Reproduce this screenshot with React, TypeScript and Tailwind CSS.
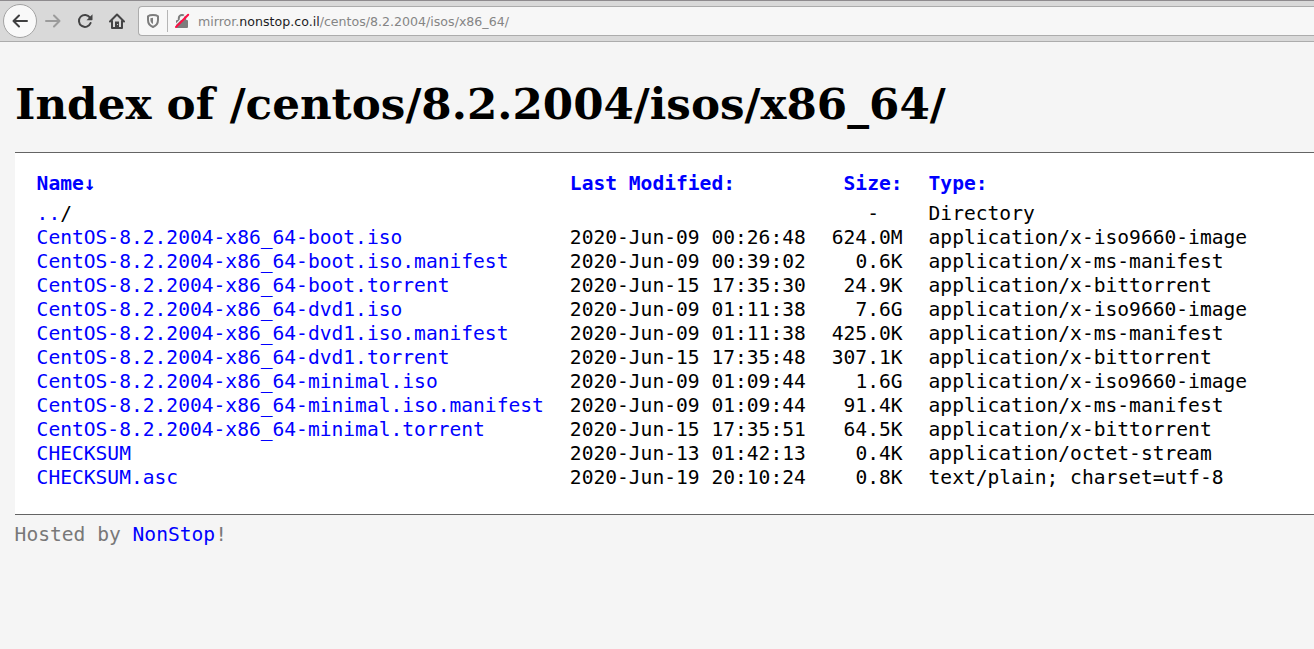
import React from "react";

type Entry = { name: string; modified: string; size: string; type: string };

const entries: Entry[] = [
  { name: "CentOS-8.2.2004-x86_64-boot.iso", modified: "2020-Jun-09 00:26:48", size: "624.0M", type: "application/x-iso9660-image" },
  { name: "CentOS-8.2.2004-x86_64-boot.iso.manifest", modified: "2020-Jun-09 00:39:02", size: "0.6K", type: "application/x-ms-manifest" },
  { name: "CentOS-8.2.2004-x86_64-boot.torrent", modified: "2020-Jun-15 17:35:30", size: "24.9K", type: "application/x-bittorrent" },
  { name: "CentOS-8.2.2004-x86_64-dvd1.iso", modified: "2020-Jun-09 01:11:38", size: "7.6G", type: "application/x-iso9660-image" },
  { name: "CentOS-8.2.2004-x86_64-dvd1.iso.manifest", modified: "2020-Jun-09 01:11:38", size: "425.0K", type: "application/x-ms-manifest" },
  { name: "CentOS-8.2.2004-x86_64-dvd1.torrent", modified: "2020-Jun-15 17:35:48", size: "307.1K", type: "application/x-bittorrent" },
  { name: "CentOS-8.2.2004-x86_64-minimal.iso", modified: "2020-Jun-09 01:09:44", size: "1.6G", type: "application/x-iso9660-image" },
  { name: "CentOS-8.2.2004-x86_64-minimal.iso.manifest", modified: "2020-Jun-09 01:09:44", size: "91.4K", type: "application/x-ms-manifest" },
  { name: "CentOS-8.2.2004-x86_64-minimal.torrent", modified: "2020-Jun-15 17:35:51", size: "64.5K", type: "application/x-bittorrent" },
  { name: "CHECKSUM", modified: "2020-Jun-13 01:42:13", size: "0.4K", type: "application/octet-stream" },
  { name: "CHECKSUM.asc", modified: "2020-Jun-19 20:10:24", size: "0.8K", type: "text/plain; charset=utf-8" },
];

function Toolbar() {
  return (
    <header className="flex h-[42px] items-center border-t border-b border-t-[#8e8b8e] border-b-[#acacac] bg-[#d9d9d9]">
      <button aria-label="Back" className="ml-[3px] flex size-[34px] shrink-0 items-center justify-center rounded-full border border-[#a3a3a3] bg-[#f9f9f9]">
        <svg width="16" height="16" viewBox="0 0 16 16" fill="none" stroke="#3f3f40" strokeWidth="2" strokeLinecap="round" strokeLinejoin="round">
          <path d="M15 8H1.5M7 2.5L1.5 8L7 13.5" />
        </svg>
      </button>
      <button aria-label="Forward" className="ml-2 shrink-0">
        <svg width="16" height="16" viewBox="0 0 16 16" fill="none" stroke="#9b9b9b" strokeWidth="2" strokeLinecap="round" strokeLinejoin="round">
          <path d="M1 8H14.5M9 2.5L14.5 8L9 13.5" />
        </svg>
      </button>
      <button aria-label="Reload" className="ml-4 shrink-0">
        <svg width="16" height="16" viewBox="0 0 16 16" fill="none">
          <path d="M13 4.6A6 6 0 1 0 13.6 10" stroke="#444445" strokeWidth="2" strokeLinecap="round" />
          <path d="M15.5 1.2V6.6a.6.6 0 0 1-.6.6H9.5Z" fill="#444445" />
        </svg>
      </button>
      <button aria-label="Home" className="ml-4 shrink-0">
        <svg width="16" height="16" viewBox="0 0 16 16" fill="none" stroke="#444445" strokeWidth="2" strokeLinecap="round" strokeLinejoin="round">
          <path d="M1 8.5L8 1.5L15 8.5M3 8V15H13V8" />
          <path d="M6 15V8.5H10V15Z" fill="#444445" stroke="none" />
          <path d="M8.5 11.5h.2" stroke="#d9d9d9" strokeWidth="1" />
        </svg>
      </button>
      <div className="ml-[13px] flex h-[30px] flex-1 items-center rounded-l border border-r-0 border-[#acacac] bg-[#f7f7f7]">
        <svg className="ml-1.5 shrink-0" width="16" height="16" viewBox="0 0 16 16">
          <path d="M8 2C10 2 12 2.5 13 3.2V7C13 10.5 11 12.8 8 14C5 12.8 3 10.5 3 7V3.2C4 2.5 6 2 8 2Z" fill="none" stroke="#7d7d7d" strokeWidth="2" strokeLinejoin="round" />
          <path d="M8 4.7V11C6.2 10 5.4 8.7 5.4 7V5.2Z" fill="#7d7d7d" />
        </svg>
        <div className="ml-1.5 h-[22px] w-px bg-[#b5b5b5]" />
        <svg className="ml-1.5 shrink-0" width="16" height="16" viewBox="0 0 16 16" fill="none">
          <path d="M4.8 8V5.2a3.2 3.2 0 0 1 6.4 0V8" stroke="#7d7d7d" strokeWidth="2" />
          <rect x="2" y="7" width="12" height="8" rx="1" fill="#7d7d7d" />
          <path d="M.6 12.6L13.2 0" stroke="#f7f7f7" strokeWidth="1.2" />
          <path d="M2 14L14.2 1.8" stroke="#ff0f45" strokeWidth="2" strokeLinecap="round" />
        </svg>
        <span className="mt-0.5 ml-2 font-['DejaVu_Sans',sans-serif] text-[12.6px] leading-4 whitespace-nowrap text-[#858585]">
          mirror.<span className="text-[#1d1d1f]">nonstop.co.il</span>/centos/8.2.2004/isos/x86_64/
        </span>
      </div>
    </header>
  );
}

export default function App() {
  return (
    <div className="flex h-screen flex-col overflow-hidden bg-[#f5f5f5]">
      <Toolbar />
      <main className="pl-[15px] font-['DejaVu_Sans_Mono',monospace] text-[19.6px] leading-6 text-black">
        <h1 className="mt-9 mb-[22px] font-['DejaVu_Serif',serif] text-[43.64px] leading-[52px] font-bold whitespace-nowrap">
          Index of /centos/8.2.2004/isos/x86_64/
        </h1>
        <section className="h-[363px] border-y border-[#646464] bg-white pt-[19px] pl-[21.6px]">
          <table className="border-collapse text-left whitespace-nowrap">
            <thead>
              <tr className="text-[#0000ff]">
                <th className="pr-[26px] pb-1.5"><a href="#name">Name</a>↓</th>
                <th className="pr-[26px] pb-1.5"><a href="#modified">Last Modified:</a></th>
                <th className="pr-[26px] pb-1.5 text-right"><a href="#size">Size:</a></th>
                <th className="pb-1.5"><a href="#type">Type:</a></th>
              </tr>
            </thead>
            <tbody>
              <tr>
                <td><a href="#parent" className="text-[#0000ff]">..</a>/</td>
                <td />
                <td className="pr-[26px] text-right whitespace-pre">{"-  "}</td>
                <td>Directory</td>
              </tr>
              {entries.map((e) => (
                <tr key={e.name}>
                  <td className="pr-[26px]"><a href={"#" + e.name} className="text-[#0000ff]">{e.name}</a></td>
                  <td className="pr-[26px]">{e.modified}</td>
                  <td className="pr-[26px] text-right">{e.size}</td>
                  <td>{e.type}</td>
                </tr>
              ))}
            </tbody>
          </table>
        </section>
        <footer className="-ml-[0.4px] pt-2 text-[#787878]">
          Hosted by <a href="#host" className="text-[#0000ff]">NonStop</a>!
        </footer>
      </main>
    </div>
  );
}
